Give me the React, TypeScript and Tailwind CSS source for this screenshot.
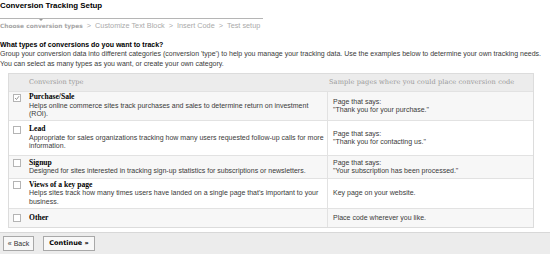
import React from 'react'

const ROWS = [
  {
    key: 'purchase', title: 'Purchase/Sale', checked: true, bg: 'bg-[#f7f7f7]', h: 'h-[29px]',
    desc: 'Helps online commerce sites track purchases and sales to determine return on investment (ROI).',
    sample: ['Page that says:', '"Thank you for your purchase."'],
  },
  {
    key: 'lead', title: 'Lead', checked: false, bg: 'bg-white', h: 'h-[35px]',
    desc: 'Appropriate for sales organizations tracking how many users requested follow-up calls for more information.',
    sample: ['Page that says:', '"Thank you for contacting us."'],
  },
  {
    key: 'signup', title: 'Signup', checked: false, bg: 'bg-[#f7f7f7]', h: 'h-[23px]',
    desc: 'Designed for sites interested in tracking sign-up statistics for subscriptions or newsletters.',
    sample: ['Page that says:', '"Your subscription has been processed."'],
  },
  {
    key: 'views', title: 'Views of a key page', checked: false, bg: 'bg-white', h: 'h-[30px]',
    desc: "Helps sites track how many times users have landed on a single page that's important to your business.",
    sample: ['Key page on your website.'],
  },
  {
    key: 'other', title: 'Other', checked: false, bg: 'bg-[#f7f7f7]', h: 'h-[19px]',
    desc: null,
    sample: ['Place code wherever you like.'],
  },
]

function Check({ checked }: { checked: boolean }) {
  return (
    <span className="w-[8px] h-[8px] border border-[#b4b4b4] bg-white flex items-center justify-center">
      {checked && (
        <svg width="6" height="6" viewBox="0 0 6 6">
          <path d="M1 3 L2.5 4.5 L5 1.2" fill="none" stroke="#888" strokeWidth="0.9" />
        </svg>
      )}
    </span>
  )
}

export default function App() {
  return (
    <div className="w-[550px] h-[254px] bg-white overflow-hidden flex flex-col text-[#3a3a3a] font-['Liberation_Sans',Arial,sans-serif]">
      {/* title */}
      <h1 className="text-[7.9px] font-bold text-black leading-[10px] mt-[1px]">
        Conversion Tracking Setup
      </h1>

      {/* progress line */}
      <div className="relative w-[263px] h-px bg-[#b5b5b5] mt-[7px]">
        <span className="absolute left-[39px] top-px w-0 h-0 border-l-[2px] border-r-[2px] border-t-[2px] border-l-transparent border-r-transparent border-t-[#999]" />
      </div>

      {/* steps */}
      <div className="flex items-center gap-[4px] mt-[2px] text-[7.3px] leading-[10px] text-[#aaa]">
        <span className="font-bold text-[#a5a5a5] font-['DejaVu_Sans',Verdana,sans-serif] text-[5.9px]">Choose conversion types</span>
        <span>&gt;</span><span>Customize Text Block</span>
        <span>&gt;</span><span>Insert Code</span>
        <span>&gt;</span><span>Test setup</span>
      </div>

      {/* intro */}
      <p className="mt-[9px] text-[7px] leading-[9px] font-bold text-black">
        What types of conversions do you want to track?
      </p>
      <p className="text-[7px] leading-[9.5px] whitespace-nowrap">
        Group your conversion data into different categories (conversion 'type') to help you manage your tracking data. Use the examples below to determine your own tracking needs.
      </p>
      <p className="text-[7px] leading-[9.5px]">
        You can select as many types as you want, or create your own category.
      </p>

      {/* table */}
      <div className="ml-[8px] mt-[5px] w-[526px] border border-[#dcdcdc] text-[7px] leading-[8.5px]">
        <div className="flex h-[17px] items-center bg-[#ececec] text-[#999] font-['DejaVu_Serif',Georgia,serif] text-[6.6px]">
          <div className="w-[318px] pl-[20px]">Conversion type</div>
          <div className="flex-1 pl-[2px] tracking-[0.1px]">Sample pages where you could place conversion code</div>
        </div>
        {ROWS.map(r => (
          <div key={r.key} className={`flex border-t border-[#e2e2e2] ${r.bg} ${r.h}`}>
            <div className="w-[318px] flex items-center">
              <div className="w-[20px] self-stretch flex items-center pl-[4px]">
                <div className="flex flex-col justify-center">
                  <div className="h-[8.5px] flex items-center"><Check checked={r.checked} /></div>
                  {r.desc && <div className="h-[8.5px]" />}
                  {r.desc && r.key !== 'signup' && <div className="h-[8.5px]" />}
                </div>
              </div>
              <div className="flex-1 pr-px">
                <div className="font-bold text-black font-['Liberation_Serif',Georgia,serif] text-[7.6px]">{r.title}</div>
                {r.desc && <div>{r.desc}</div>}
              </div>
            </div>
            <div className="flex-1 border-l border-[#e2e2e2] pl-[5px] flex flex-col justify-center">
              {r.sample.map(s => <div key={s}>{s}</div>)}
            </div>
          </div>
        ))}
      </div>

      {/* footer */}
      <div className="mt-auto h-[22px] bg-[#ececec] border-t border-[#d8d8d8] flex items-center gap-[9px] px-[3px]">
        <button className="h-[15px] w-[31px] border border-[#a8a8a8] bg-[#f8f8f8] text-[7px] text-[#333] leading-none">
          « Back
        </button>
        <button className="h-[15px] w-[52px] border border-[#a8a8a8] bg-[#f8f8f8] text-[6.5px] font-bold text-black leading-none font-['DejaVu_Sans',Verdana,sans-serif]">
          Continue »
        </button>
      </div>
    </div>
  )
}
